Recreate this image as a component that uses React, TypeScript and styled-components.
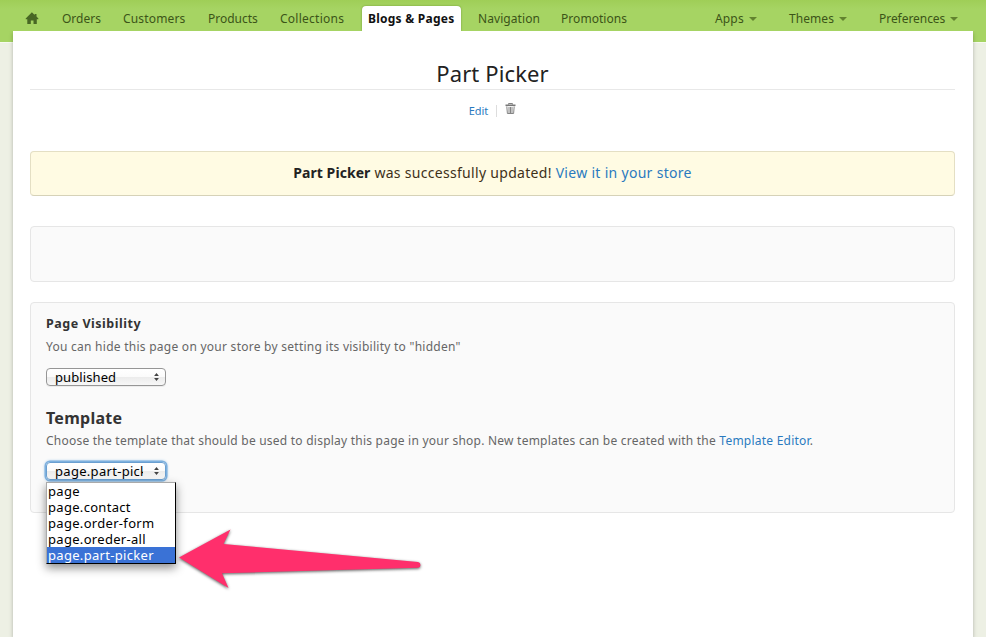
import React from 'react';
import styled, { createGlobalStyle } from 'styled-components';

const GlobalStyle = createGlobalStyle`
  * { box-sizing: border-box; }
  html, body { margin: 0; padding: 0; }
  body {
    background: #edf0e4;
    font-family: 'Noto Sans', 'Open Sans', sans-serif;
    font-size: 12px;
    color: #333;
    overflow: hidden;
  }
`;

const Page = styled.div`
  height: 637px;
  display: flex;
  flex-direction: column;
  overflow: hidden;
`;

const Header = styled.header`
  flex: none;
  height: 43px;
  padding: 6px 28px 11px 25px;
  display: flex;
  align-items: stretch;
  background: linear-gradient(#9fce57 0, #a6d463 9px, #a6d463 100%);
  border-bottom: 1px solid #f6faef;
`;

const HomeLink = styled.a`
  width: 37px;
  padding-top: 6px;
  svg { display: block; }
`;

const NavItem = styled.a<{ $width: number; $gap?: number; $spacing?: number }>`
  flex: none;
  width: ${p => p.$width}px;
  margin-right: ${p => p.$gap ?? 22}px;
  line-height: 25px;
  letter-spacing: ${p => p.$spacing ?? 0}px;
  color: #3c5418;
  white-space: nowrap;
`;

const ActiveTab = styled(NavItem)`
  position: relative;
  z-index: 1;
  padding-left: 6px;
  background: #fff;
  border-radius: 4px 4px 0 0;
  box-shadow: 0 0 2px rgba(60, 90, 10, 0.5);
  clip-path: inset(-3px -3px 0);
  color: #111;
  font-weight: 700;
`;

const MenuGroup = styled.div`
  display: flex;
  margin-left: auto;
`;

const MenuItem = styled(NavItem)`
  display: flex;
  align-items: center;
  justify-content: space-between;
  &:last-child { margin-right: 0; }
`;

const Caret = styled.i`
  margin-top: 1px;
  border: solid transparent;
  border-width: 4px 4px 0;
  border-top-color: #62832f;
`;

const Card = styled.main`
  flex: 1;
  margin: -12px 13px 0;
  padding: 0 18px 0 17px;
  background: #fff;
  box-shadow: 0 2px 4px rgba(0, 0, 0, 0.25);
  clip-path: inset(0 -10px);
`;

const Title = styled.h1`
  height: 59px;
  margin: 0;
  padding-top: 27px;
  border-bottom: 1px solid #e8e8e8;
  font-size: 22px;
  line-height: 30px;
  font-weight: 400;
  letter-spacing: 0.12px;
  text-align: center;
  color: #222;
`;

const Link = styled.a`
  color: #2a7abf;
`;

const Actions = styled.div`
  height: 61px;
  padding-top: 13px;
  display: flex;
  justify-content: center;
  align-items: flex-start;
  font-size: 11px;
  line-height: 16px;
  svg { display: block; }
`;

const Divider = styled.span`
  width: 1px;
  height: 12px;
  margin: 2px 8px 0;
  background: #ddd;
`;

const Notice = styled.section`
  height: 45px;
  border: 1px solid #e4dfc4;
  border-bottom-color: #d6d2b8;
  border-radius: 4px;
  background: #fffbe3;
  font-size: 14px;
  line-height: 42px;
  text-align: center;
  letter-spacing: 0.3px;
  color: #3e3019;
  white-space: nowrap;
  strong { letter-spacing: 0.07px; color: #222; }
`;

const Panel = styled.section<{ $height: number; $top: number }>`
  height: ${p => p.$height}px;
  margin-top: ${p => p.$top}px;
  padding: 0 15px;
  border: 1px solid #e6e6e6;
  border-radius: 4px;
  background: #fafafa;
`;

const FieldTitle = styled.h2<{ $large?: boolean }>`
  margin: 0;
  padding-top: ${p => (p.$large ? 20 : 12)}px;
  font-size: ${p => (p.$large ? 16 : 12.5)}px;
  line-height: ${p => (p.$large ? 24 : 18)}px;
  letter-spacing: ${p => (p.$large ? 0.26 : 0.51)}px;
  color: #333;
`;

const Hint = styled.p<{ $spacing: number; $top: number }>`
  margin: ${p => p.$top}px 0 0;
  line-height: 18px;
  letter-spacing: ${p => p.$spacing}px;
  color: #666;
  white-space: nowrap;
`;

const Select = styled.div<{ $focused?: boolean; $top: number }>`
  position: relative;
  width: 120px;
  height: 18px;
  margin-top: ${p => p.$top}px;
  padding: 0 6px 0 8px;
  display: flex;
  align-items: center;
  justify-content: space-between;
  border: 1px solid ${p => (p.$focused ? '#6a9fd0' : '#969696')};
  border-radius: 4px;
  background: linear-gradient(#fff 0, #fbfbfb 48%, #ececec 52%, #f7f7f7 100%);
  box-shadow: ${p => (p.$focused ? '0 0 0 1.5px #7db0de, 0 0 3px 1px #8dbce6' : '0 1px 0 #ececec')};
  font-size: 13px;
  letter-spacing: ${p => (p.$focused ? 0.3 : 0.1)}px;
  color: #000;
`;

const Value = styled.span`
  width: 88px;
  height: 18px;
  line-height: 18px;
  overflow: hidden;
  white-space: nowrap;
`;

const Options = styled.ul`
  position: absolute;
  z-index: 1;
  left: -1px;
  top: 19px;
  width: 130px;
  margin: 0;
  padding: 0;
  list-style: none;
  background: #fff;
  border: 1px solid;
  border-color: #aaa #000 #000 #aaa;
  box-shadow: 0 4px 9px rgba(0, 0, 0, 0.45);
`;

const Option = styled.li<{ $selected?: boolean }>`
  height: 16px;
  padding-left: 1px;
  line-height: 16px;
  letter-spacing: 0.31px;
  background: ${p => (p.$selected ? '#3a72d6' : '#fff')};
  color: ${p => (p.$selected ? '#fff' : '#000')};
`;

const Pointer = styled.svg`
  position: absolute;
  z-index: 2;
  left: 170px;
  top: 520px;
  filter: drop-shadow(0 1.5px 1.5px rgba(0, 0, 0, 0.65));
`;

const HomeIcon = () => (
  <svg width="14" height="13" viewBox="0 0 14 13" fill="#486724">
    <path d="M6.9.2 9.7 2.9V2h1.8v2.6L13.4 6.500V7.300H11.800V12H8.500V8.400H5.800V12H2.300V7.300H.7V6.500z" />
  </svg>
);

const TrashIcon = () => (
  <svg width="11" height="12" viewBox="0 0 11 12" fill="none" stroke="#777">
    <path d="M3.500 1.500V.6h4v.9" />
    <path d="M.5 2.300h10" strokeWidth="1.600" />
    <path d="M1.800 3.500 2.400 10.500h6.200L9.200 3.500M4 4v6M5.500 4v6M7 4v6" strokeWidth=".9" />
  </svg>
);

const Stepper = () => (
  <svg width="5" height="8" viewBox="0 0 5 8" fill="#444">
    <path d="M2.500 0 4.900 3H.1zM2.500 8 4.900 5H.1z" />
  </svg>
);

const options = ['page', 'page.contact', 'page.order-form', 'page.oreder-all', 'page.part-picker'];

export default function App() {
  return (
    <Page>
      <GlobalStyle />
      <Header>
        <HomeLink><HomeIcon /></HomeLink>
        <NavItem $width={39}>Orders</NavItem>
        <NavItem $width={63} $spacing={0.16}>Customers</NavItem>
        <NavItem $width={50}>Products</NavItem>
        <NavItem $width={64} $gap={18} $spacing={0.25}>Collections</NavItem>
        <ActiveTab $width={99} $gap={17} $spacing={0.24}>Blogs &amp; Pages</ActiveTab>
        <NavItem $width={61} $spacing={0.07}>Navigation</NavItem>
        <NavItem $width={66} $spacing={0.05}>Promotions</NavItem>
        <MenuGroup>
          <MenuItem $width={42} $gap={32} $spacing={0.15}>Apps<Caret /></MenuItem>
          <MenuItem $width={58} $gap={32} $spacing={0.07}>Themes<Caret /></MenuItem>
          <MenuItem $width={79} $spacing={-0.05}>Preferences<Caret /></MenuItem>
        </MenuGroup>
      </Header>
      <Card>
        <Title>Part Picker</Title>
        <Actions>
          <Link>Edit</Link>
          <Divider />
          <TrashIcon />
        </Actions>
        <Notice>
          <strong>Part Picker</strong> was successfully updated! <Link>View it in your store</Link>
        </Notice>
        <Panel $height={56} $top={30} />
        <Panel $height={211} $top={20}>
          <FieldTitle>Page Visibility</FieldTitle>
          <Hint $top={5} $spacing={0.26}>
            You can hide this page on your store by setting its visibility to "hidden"
          </Hint>
          <Select $top={12}>
            <Value>published</Value>
            <Stepper />
          </Select>
          <FieldTitle $large>Template</FieldTitle>
          <Hint $top={2} $spacing={0.23}>
            Choose the template that should be used to display this page in your shop. New templates can be
            created with the <Link>Template Editor</Link>.
          </Hint>
          <Select $focused $top={12}>
            <Value>page.part-picker</Value>
            <Stepper />
            <Options>
              {options.map(name => (
                <Option key={name} $selected={name === 'page.part-picker'}>{name}</Option>
              ))}
            </Options>
          </Select>
        </Panel>
      </Card>
      <Pointer width="260" height="80" viewBox="0 0 260 80">
        <path
          d="M9 37.500 60.500 9.500 53.500 24 248 42Q250.500 42.500 250.500 45T248 47.700L52 53.300 58.500 68z"
          fill="#ff2f6c"
        />
      </Pointer>
    </Page>
  );
}
